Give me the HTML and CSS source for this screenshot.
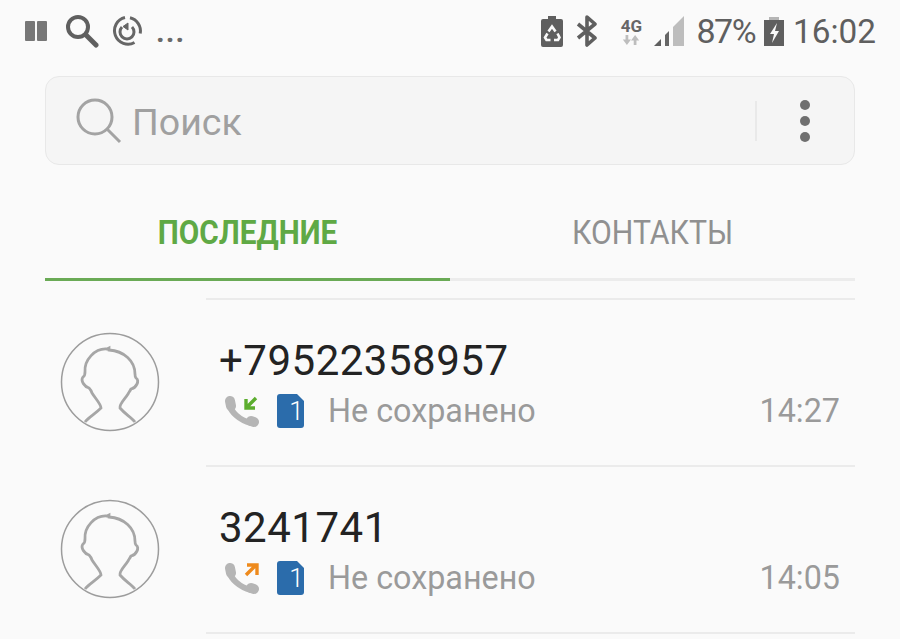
FILE: index.html
```html
<!DOCTYPE html>
<html lang="ru">
<head>
    <meta charset="UTF-8">
    <meta name="viewport" content="width=device-width, initial-scale=1.0">
    <title>Телефон</title>
    <link rel="stylesheet" href="styles.css">
</head>
<body>
    <div class="status-bar">
        <div class="status-left">
            <svg class="ic-pause" width="24" height="24" viewBox="0 0 24 24"><rect x="1" y="2" width="10" height="20" rx="1" fill="#777"/><rect x="13" y="2" width="10" height="20" rx="1" fill="#777"/></svg>
            <svg class="ic-find" width="34" height="34" viewBox="0 0 34 34" fill="none" stroke="#5f5f5f"><circle cx="13" cy="13" r="10" stroke-width="4"/><path d="M21 21l10 10" stroke-width="5" stroke-linecap="round"/></svg>
            <svg class="ic-power" width="32" height="32" viewBox="0 0 32 32" fill="none" stroke="#666" stroke-width="3"><path d="M14 2.500A13.500 13.500 0 1 0 23.500 27.500"/><path d="M19 2.800A13.500 13.500 0 0 1 29.200 18.500"/><path d="M11 12a7 7 0 1 0 10 0"/><path d="M17 8l-5 3.500 5 3.500z" fill="#666" stroke-width="1"/></svg>
            <span class="more">...</span>
        </div>
        <div class="status-right">
            <svg class="ic-batt-save" width="22" height="31" viewBox="0 0 22 31"><path d="M7 0h8v3h5a2 2 0 0 1 2 2v24a2 2 0 0 1-2 2H2a2 2 0 0 1-2-2V5a2 2 0 0 1 2-2h5z" fill="#5f5f5f"/><path d="M7.500 15.500l3.500-5 3.500 5M16.500 17.500l2 4-1.500 2.500h-4M9.500 24H5.500l-1.500-2.500 2.500-4" fill="none" stroke="#fafafa" stroke-width="2.600"/></svg>
            <svg class="ic-bt" width="22" height="32" viewBox="0 0 22 32" fill="none" stroke="#5f5f5f" stroke-width="3.600" stroke-linejoin="round"><path d="M2 9l17 14-8 7V2l8 7L2 23"/></svg>
            <div class="net">
                <span class="net-label">4G</span>
                <svg width="18" height="10" viewBox="0 0 18 11" fill="#bdbdbd"><path d="M3 0h3v5h3l-4.500 6L0 5h3zM13.500 0L18 6h-3v5h-3V6H9z"/></svg>
            </div>
            <svg class="ic-signal" width="30" height="30" viewBox="0 0 30 30"><path d="M30 0v30H19V11z" fill="#bdbdbd"/><path d="M15 15v15h-4V19z" fill="#666"/><path d="M7 23v7H0z" fill="#5f5f5f"/></svg>
            <span class="pct">87%</span>
            <svg class="ic-batt" width="20" height="29" viewBox="0 0 20 29"><path d="M5 0h10v3H5z" fill="#b5b5b5"/><path d="M0 3h20v26H0z" fill="#5f5f5f"/><path d="M13 6l-7 11h4l-2 9 7-12h-4z" fill="#fafafa"/></svg>
            <span class="clock">16:02</span>
        </div>
    </div>

    <div class="search">
        <svg class="ic-search" width="46" height="46" viewBox="0 0 46 46" fill="none" stroke="#a3a3a3" stroke-width="3"><circle cx="19" cy="19" r="17"/><path d="M31 31l13 13"/></svg>
        <span class="search-text">Поиск</span>
        <span class="search-sep"></span>
        <span class="kebab"><i></i><i></i><i></i></span>
    </div>

    <div class="tabs">
        <div class="tab tab-active"><span>ПОСЛЕДНИЕ</span></div>
        <div class="tab"><span>КОНТАКТЫ</span></div>
    </div>

    <div class="list">
        <div class="row">
            <svg class="avatar" width="100" height="100" viewBox="0 0 100 100" fill="none" stroke="#a6a6a6"><circle cx="50" cy="50" r="48.500" stroke-width="1.500" stroke="#9c9c9c"/><path d="M25 90c4-5 10-8 16-14 0-4-6-10-9-15-1-3-2-4-3-5-4-1-9-7-6-11 2-1 2-3 2-5-1-12 10-24 22-23l2-1 0 2c15 1 26 11 26 24 0 2 0 3 1 4 4 3 0 10-5 11-1 2-2 3-3 5-3 5-9 10-8 14 5 6 11 9 15 14" stroke-width="2.800"/></svg>
            <div class="info">
                <div class="number">+79522358957</div>
                <div class="meta">
                    <svg class="ic-call" width="36" height="34" viewBox="0 0 36 34" fill="none"><path d="M4 10c2 8 10 16 22 19" stroke="#b5b5b5" stroke-width="6"/><path d="M5 7l1 5M26 27l3 1" stroke="#b5b5b5" stroke-width="10" stroke-linecap="round"/><path d="M31 4l-9 9m-1-8v9h9" stroke="#5cad2e" stroke-width="3.400"/></svg>
                    <svg class="ic-sim" width="27" height="34" viewBox="0 0 27 34"><path d="M3 0h17l7 7v24a3 3 0 0 1-3 3H3a3 3 0 0 1-3-3V3a3 3 0 0 1 3-3z" fill="#2b6cab"/></svg>
                    <span class="sim-num">1</span>
                    <span class="state">Не сохранено</span>
                    <span class="time">14:27</span>
                </div>
            </div>
        </div>
        <div class="row">
            <svg class="avatar" width="100" height="100" viewBox="0 0 100 100" fill="none" stroke="#a6a6a6"><circle cx="50" cy="50" r="48.500" stroke-width="1.500" stroke="#9c9c9c"/><path d="M25 90c4-5 10-8 16-14 0-4-6-10-9-15-1-3-2-4-3-5-4-1-9-7-6-11 2-1 2-3 2-5-1-12 10-24 22-23l2-1 0 2c15 1 26 11 26 24 0 2 0 3 1 4 4 3 0 10-5 11-1 2-2 3-3 5-3 5-9 10-8 14 5 6 11 9 15 14" stroke-width="2.800"/></svg>
            <div class="info">
                <div class="number">3241741</div>
                <div class="meta">
                    <svg class="ic-call" width="36" height="34" viewBox="0 0 36 34" fill="none"><path d="M4 10c2 8 10 16 22 19" stroke="#b5b5b5" stroke-width="6"/><path d="M5 7l1 5M26 27l3 1" stroke="#b5b5b5" stroke-width="10" stroke-linecap="round"/><path d="M21 14l10-10m-9 0h10v10" stroke="#ee8a1d" stroke-width="3.400"/></svg>
                    <svg class="ic-sim" width="27" height="34" viewBox="0 0 27 34"><path d="M3 0h17l7 7v24a3 3 0 0 1-3 3H3a3 3 0 0 1-3-3V3a3 3 0 0 1 3-3z" fill="#2b6cab"/></svg>
                    <span class="sim-num">1</span>
                    <span class="state">Не сохранено</span>
                    <span class="time">14:05</span>
                </div>
            </div>
        </div>
    </div>
</body>
</html>
```

FILE: styles.css
```css
html, body {
    margin: 0;
    height: 639px;
    overflow: hidden;
}
body {
    background-color: #fafafa;
    font-family: Roboto, "Liberation Sans", sans-serif;
    color: #222;
}
.status-bar {
    display: flex;
    justify-content: space-between;
    height: 62px;
    padding: 0 24px 0 24px;
    box-sizing: border-box;
    align-items: center;
}
.status-left, .status-right {
    display: flex;
    align-items: center;
}
.ic-pause { margin-right: 17px; }
.ic-find { margin-right: 12px; }
.ic-power { margin-right: 13px; }
.more {
    font-size: 30px;
    font-weight: 700;
    color: #6a6a6a;
    letter-spacing: 1px;
    line-height: 1;
    margin-top: 2px;
}
.ic-bt { margin-left: 13px; }
.net {
    display: flex;
    flex-direction: column;
    align-items: center;
    margin-left: 21px;
    width: 24px;
}
.net-label {
    font-size: 17px;
    font-weight: 700;
    color: #666;
    line-height: 18px;
}
.ic-signal { margin-left: 11px; }
.pct {
    font-size: 34px;
    color: #5f5f5f;
    margin-left: 12px;
    letter-spacing: -1.500px;
}
.ic-batt { margin-left: 9px; }
.clock {
    font-size: 33.300px;
    color: #5f5f5f;
    margin-left: 9px;
}
.search {
    display: flex;
    align-items: center;
    margin: 14px 45px 0;
    height: 87px;
    padding: 0 44px 0 30px;
    background-color: #f5f5f5;
    border: 1px solid #e8e8e8;
    border-radius: 14px;
}
.search-text {
    font-size: 37.500px;
    color: #a0a0a0;
    margin: 2px 0 0 10px;
    flex: 1;
}
.search-sep {
    width: 2px;
    height: 40px;
    background-color: #e9e9e9;
    margin-right: 43px;
}
.kebab {
    display: flex;
    flex-direction: column;
    gap: 6px;
}
.kebab i {
    display: block;
    width: 10px;
    height: 10px;
    border-radius: 50%;
    background-color: #6f6f6f;
}
.tabs {
    display: flex;
    margin: 0 45px;
    height: 116px;
    box-sizing: border-box;
}
.tab {
    flex: 1;
    display: flex;
    align-items: center;
    justify-content: center;
    padding-top: 20px;
    border-bottom: 3px solid #ececec;
    font-size: 34px;
    color: #909090;
    box-sizing: border-box;
}
.tab span {
    display: inline-block;
    transform: scaleX(0.89);
    white-space: nowrap;
}
.tab-active {
    border-bottom: 3px solid #6aaa55;
    color: #5fa945;
    font-weight: 700;
}
.tab-active span {
    transform: scaleX(0.875);
}
.list {
    margin: 17px 45px 0 206px;
    width: 649px;
    border-bottom: 2px solid #ebebeb;
}
.row {
    position: relative;
    display: flex;
    height: 167px;
    box-sizing: border-box;
    border-top: 2px solid #ebebeb;
}
.avatar {
    position: absolute;
    left: -146px;
    top: 32px;
}
.info {
    flex: 1;
    padding: 36px 15px 0 13px;
}
.number {
    font-size: 42px;
    line-height: 50px;
    color: #232323;
    letter-spacing: 0.500px;
}
.meta {
    position: relative;
    display: flex;
    align-items: center;
    margin-top: 7px;
    height: 36px;
}
.ic-call { margin-left: 6px; }
.ic-sim { margin-left: 16px; }
.sim-num {
    position: absolute;
    left: 64px;
    width: 27px;
    text-align: center;
    font-size: 26px;
    font-weight: 300;
    color: #fff;
}
.state {
    margin-left: 24px;
    font-size: 32.300px;
    color: #9a9a9a;
}
.time {
    margin-left: auto;
    font-size: 32.300px;
    color: #9a9a9a;
}
```
